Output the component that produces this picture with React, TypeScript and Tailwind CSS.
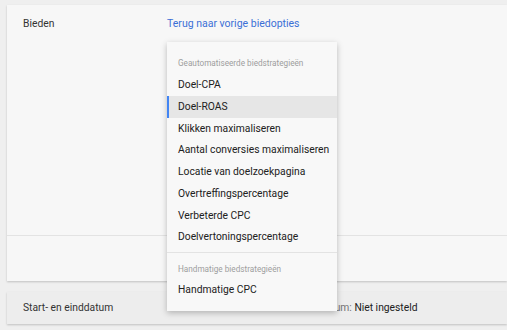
const automated = [
  "Doel-CPA",
  "Doel-ROAS",
  "Klikken maximaliseren",
  "Aantal conversies maximaliseren",
  "Locatie van doelzoekpagina",
  "Overtreffingspercentage",
  "Verbeterde CPC",
  "Doelvertoningspercentage",
];

function MenuItem({ label, active }: { label: string; active?: boolean }) {
  return (
    <div
      className={`flex h-[21.7px] items-center whitespace-nowrap border-l-2 pl-[9px] text-[10.3px] text-[#212121] ${
        active ? "border-[#4285f4] bg-[#e6e6e6]" : "border-transparent"
      }`}
    >
      {label}
    </div>
  );
}

function StrategyMenu() {
  return (
    <div className="absolute left-[160px] top-[37px] z-10 w-[170px] bg-[#f8f8f8] pb-[10px] shadow-[0_2px_6px_rgba(0,0,0,0.25)]">
      <div className="pt-[15px] pb-[5px] pl-[11px] text-[8.2px] text-[#9e9e9e]">Geautomatiseerde biedstrategieën</div>
      {automated.map((s) => (
        <MenuItem key={s} label={s} active={s === "Doel-ROAS"} />
      ))}
      <div className="mt-[4px] border-t border-[#e3e3e3] pt-[10px] pb-[4px] pl-[11px] text-[8.2px] text-[#9e9e9e]">
        Handmatige biedstrategieën
      </div>
      <MenuItem label="Handmatige CPC" />
    </div>
  );
}

export default function App() {
  return (
    <div className="h-[330px] w-[507px] overflow-hidden bg-[#efefef] pt-[5px] pl-[7px] font-['Roboto',sans-serif] text-[10.3px] text-[#333]">
      <div className="relative h-[276px] bg-[#f7f7f7] shadow-[0_1px_2px_rgba(0,0,0,0.2)]">
        <div className="flex pt-[11px] pl-[16px]">
          <div className="w-[144px]">Bieden</div>
          <div className="text-[10.5px] text-[#3b6fd6]">Terug naar vorige biedopties</div>
        </div>
        <div className="absolute left-0 right-0 top-[230px] border-t border-[#e3e3e3]" />
        <StrategyMenu />
      </div>
      <div className="mt-[11px] flex h-[32px] items-center bg-[#ededed] pl-[16px] shadow-[0_1px_2px_rgba(0,0,0,0.2)]">
        <div className="w-[144px]">Start- en einddatum</div>
        <div className="flex">
          <span className="w-[133px] text-[#757575]">
            Startdatum: <span className="text-[#212121]">8 mei 2018</span>
          </span>
          <span className="text-[#757575]">
            Einddatum: <span className="text-[#212121]">Niet ingesteld</span>
          </span>
        </div>
      </div>
    </div>
  );
}
